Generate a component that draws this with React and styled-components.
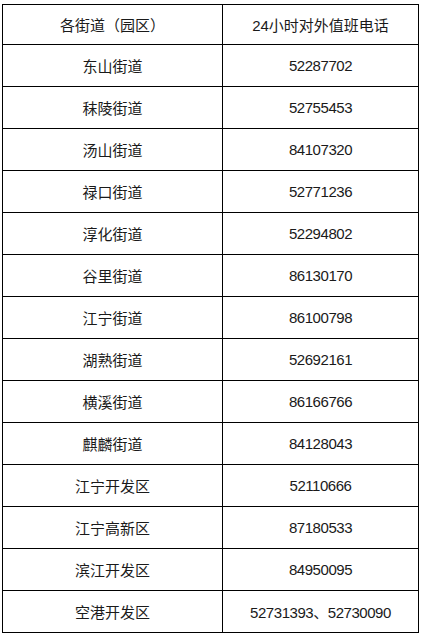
import React from "react";
import styled, { createGlobalStyle } from "styled-components";

const Global = createGlobalStyle`
  html, body { margin: 0; padding: 0; background: #fff; }
  body { font-family: "Liberation Sans", "Noto Sans CJK SC", sans-serif; }
`;

const Page = styled.div`
  padding: 4px 0 0 2px;
`;

const Table = styled.table`
  border-collapse: collapse;
  table-layout: fixed;
  width: 416px;
  color: #1a1a1a;
  font-size: 15px;
`;

const Row = styled.tr`
  height: ${(p) => (p.$head ? 40 : 42)}px;
`;

const Cell = styled.td`
  border: 1px solid #000;
  text-align: center;
  vertical-align: middle;
  padding: 0;
  white-space: nowrap;
  letter-spacing: ${(p) => (p.$num ? "-0.45px" : "0")};
`;

const data = [
  ["东山街道", "52287702"],
  ["秣陵街道", "52755453"],
  ["汤山街道", "84107320"],
  ["禄口街道", "52771236"],
  ["淳化街道", "52294802"],
  ["谷里街道", "86130170"],
  ["江宁街道", "86100798"],
  ["湖熟街道", "52692161"],
  ["横溪街道", "86166766"],
  ["麒麟街道", "84128043"],
  ["江宁开发区", "52110666"],
  ["江宁高新区", "87180533"],
  ["滨江开发区", "84950095"],
  ["空港开发区", "52731393、52730090"],
];

export default function App() {
  return (
    <>
      <Global />
      <Page>
        <Table>
          <colgroup>
            <col style={{ width: 220 }} />
            <col style={{ width: 196 }} />
          </colgroup>
          <tbody>
            <Row $head>
              <Cell>各街道（园区）</Cell>
              <Cell>24小时对外值班电话</Cell>
            </Row>
            {data.map(([n, t]) => (
              <Row key={n}>
                <Cell>{n}</Cell>
                <Cell $num>{t}</Cell>
              </Row>
            ))}
          </tbody>
        </Table>
      </Page>
    </>
  );
}
